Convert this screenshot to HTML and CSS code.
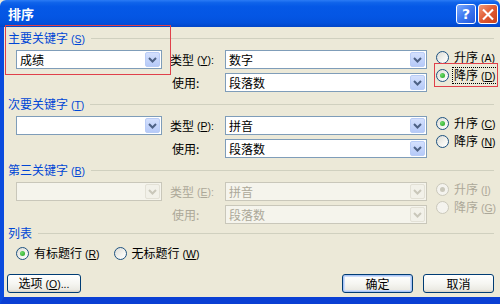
FILE: index.html
```html
<!DOCTYPE html>
<html>
<head>
<meta charset="utf-8">
<link rel="stylesheet" href="styles.css">
</head>
<body>
<div class="window">
  <div class="titlebar">
    <span class="title">排序</span>
    <div class="tb-buttons">
      <span class="tb-btn help">?</span>
      <span class="tb-btn close"><svg width="19" height="19" viewBox="0 0 19 19"><path d="M5 5 L14 14 M14 5 L5 14" stroke="#fff" stroke-width="2.2" stroke-linecap="square"/></svg></span>
    </div>
  </div>
  <div class="body">
    <section class="group">
      <div class="group-title"><span>主要关键字<span class="k"> (<u>S</u>)</span></span></div>
      <div class="group-grid">
        <div class="combo"><span class="val">成绩</span><span class="drop"><svg width="13" height="15" viewBox="0 0 13 15"><path d="M3 6 L6.5 9.5 L10 6" fill="none" stroke="#4D6185" stroke-width="2"/></svg></span></div>
        <div class="label">类型<span class="k"> (<u>Y</u>):</span></div>
        <div class="combo"><span class="val">数字</span><span class="drop"><svg width="13" height="15" viewBox="0 0 13 15"><path d="M3 6 L6.5 9.5 L10 6" fill="none" stroke="#4D6185" stroke-width="2"/></svg></span></div>
        <div class="radios">
          <label class="radio-item"><span class="radio"></span><span class="rtext">升序<span class="k"> (<u>A</u>)</span></span></label>
          <label class="radio-item"><span class="radio checked"></span><span class="rtext focus">降序<span class="k"> (<u>D</u>)</span></span></label>
        </div>
        <div class="label label-use">使用:</div>
        <div class="combo"><span class="val">段落数</span><span class="drop"><svg width="13" height="15" viewBox="0 0 13 15"><path d="M3 6 L6.5 9.5 L10 6" fill="none" stroke="#4D6185" stroke-width="2"/></svg></span></div>
      </div>
    </section>

    <section class="group">
      <div class="group-title"><span>次要关键字<span class="k"> (<u>T</u>)</span></span></div>
      <div class="group-grid">
        <div class="combo"><span class="val"></span><span class="drop"><svg width="13" height="15" viewBox="0 0 13 15"><path d="M3 6 L6.5 9.5 L10 6" fill="none" stroke="#4D6185" stroke-width="2"/></svg></span></div>
        <div class="label">类型<span class="k"> (<u>P</u>):</span></div>
        <div class="combo"><span class="val">拼音</span><span class="drop"><svg width="13" height="15" viewBox="0 0 13 15"><path d="M3 6 L6.5 9.5 L10 6" fill="none" stroke="#4D6185" stroke-width="2"/></svg></span></div>
        <div class="radios">
          <label class="radio-item"><span class="radio checked"></span><span class="rtext">升序<span class="k"> (<u>C</u>)</span></span></label>
          <label class="radio-item"><span class="radio"></span><span class="rtext">降序<span class="k"> (<u>N</u>)</span></span></label>
        </div>
        <div class="label label-use">使用:</div>
        <div class="combo"><span class="val">段落数</span><span class="drop"><svg width="13" height="15" viewBox="0 0 13 15"><path d="M3 6 L6.5 9.5 L10 6" fill="none" stroke="#4D6185" stroke-width="2"/></svg></span></div>
      </div>
    </section>

    <section class="group disabled">
      <div class="group-title"><span>第三关键字<span class="k"> (<u>B</u>)</span></span></div>
      <div class="group-grid">
        <div class="combo"><span class="val"></span><span class="drop"><svg width="13" height="15" viewBox="0 0 13 15"><path d="M3 6 L6.5 9.5 L10 6" fill="none" stroke="#C9C7BA" stroke-width="2"/></svg></span></div>
        <div class="label">类型<span class="k"> (<u>E</u>):</span></div>
        <div class="combo"><span class="val">拼音</span><span class="drop"><svg width="13" height="15" viewBox="0 0 13 15"><path d="M3 6 L6.5 9.5 L10 6" fill="none" stroke="#C9C7BA" stroke-width="2"/></svg></span></div>
        <div class="radios">
          <label class="radio-item"><span class="radio checked"></span><span class="rtext">升序<span class="k"> (<u>I</u>)</span></span></label>
          <label class="radio-item"><span class="radio"></span><span class="rtext">降序<span class="k"> (<u>G</u>)</span></span></label>
        </div>
        <div class="label label-use">使用:</div>
        <div class="combo"><span class="val">段落数</span><span class="drop"><svg width="13" height="15" viewBox="0 0 13 15"><path d="M3 6 L6.5 9.5 L10 6" fill="none" stroke="#C9C7BA" stroke-width="2"/></svg></span></div>
      </div>
    </section>

    <section class="list-group">
      <div class="group-title"><span>列表</span></div>
      <div class="radio-row">
        <label class="radio-item"><span class="radio checked"></span><span class="rtext">有标题行<span class="k"> (<u>R</u>)</span></span></label>
        <label class="radio-item"><span class="radio"></span><span class="rtext">无标题行<span class="k"> (<u>W</u>)</span></span></label>
      </div>
    </section>

    <div class="buttons">
      <button class="btn btn-options">选项<span class="k"> (<u>O</u>)...</span></button>
      <button class="btn btn-default">确定</button>
      <button class="btn">取消</button>
    </div>
  </div>
  <div class="annot annot-key"></div>
  <div class="annot annot-desc"></div>
</div>
</body>
</html>
```

FILE: styles.css
```css
body {
  margin: 0;
  font-family: "Noto Sans CJK SC", "Noto Sans", sans-serif;
  font-size: 12px;
  color: #000;
}

.window {
  position: relative;
  width: 500px;
  height: 304px;
  display: flex;
  flex-direction: column;
  background: #ECE9D8;
  overflow: hidden;
}

.titlebar {
  height: 27px;
  flex: none;
  display: flex;
  align-items: center;
  padding: 0 2px 0 8px;
  background: linear-gradient(#2B7BF5 0%, #0F63EA 10%, #0558E6 25%, #0456E4 60%, #0351DC 85%, #0246C8 100%);
  border-radius: 6px 6px 0 0;
}

.title {
  color: #fff;
  font-weight: bold;
  font-size: 13px;
  line-height: 14px;
}

.tb-buttons {
  margin-left: auto;
  display: flex;
  gap: 2px;
  margin-top: 1px;
}

.tb-btn {
  width: 20px;
  height: 20px;
  box-sizing: border-box;
  border: 1px solid #fff;
  border-radius: 3px;
  display: flex;
  align-items: center;
  justify-content: center;
}

.help {
  background: linear-gradient(135deg, #7BA9FF 0%, #3C78F0 50%, #2358DC 100%);
  color: #fff;
  font-family: "DejaVu Sans", sans-serif;
  font-weight: bold;
  font-size: 14px;
  line-height: 14px;
}

.close {
  background: linear-gradient(135deg, #F39A78 0%, #E05A32 50%, #C8401C 100%);
}

.body {
  flex: 1;
  display: flex;
  flex-direction: column;
  border-left: 4px solid #0A4BDE;
  border-bottom: 7px solid #0A3FD4;
  padding: 4px 6px 0 4px;
}

.k {
  font-family: "Liberation Sans", sans-serif;
  font-size: 10.5px;
}

.group {
  height: 61px;
  margin-bottom: 5px;
}

.group-title {
  height: 14px;
  display: flex;
  align-items: center;
  color: #0046D5;
  line-height: 14px;
  white-space: nowrap;
}

.group-title::after {
  content: "";
  flex: 1;
  height: 1px;
  background: #D0D0BF;
  margin-left: 6px;
}

.group-grid {
  margin-top: 5px;
  padding-left: 8px;
  display: grid;
  grid-template-columns: 146px 63px 202px 1fr;
  grid-template-rows: 19px 19px;
  row-gap: 4px;
}

.label {
  padding-left: 8px;
  display: flex;
  align-items: center;
  line-height: 14px;
  white-space: pre;
}

.label-use {
  grid-column: 2;
  padding-left: 10px;
}

.combo {
  box-sizing: border-box;
  height: 19px;
  border: 1px solid #7F9DB9;
  background: #fff;
  display: flex;
  align-items: center;
  padding: 0 1px 0 3px;
}

.combo .val {
  flex: 1;
  line-height: 14px;
}

.combo .drop {
  width: 15px;
  height: 15px;
  box-sizing: border-box;
  border: 1px solid #B9CCF6;
  border-radius: 2px;
  background: linear-gradient(#D4E0FD, #B6CAF8);
  display: flex;
  align-items: center;
  justify-content: center;
}

.radios {
  grid-column: 4;
  grid-row: 1 / span 2;
  padding-left: 9px;
  margin-top: -2px;
  display: flex;
  flex-direction: column;
}

.radio-item {
  height: 18px;
  display: flex;
  align-items: center;
  white-space: pre;
}

.radio {
  position: relative;
  width: 13px;
  height: 13px;
  box-sizing: border-box;
  border: 1px solid #1C5180;
  border-radius: 50%;
  background: linear-gradient(135deg, #DCDCD6 0%, #F4F4F0 60%, #FFFFFF 100%);
  margin-right: 4px;
  flex: none;
}

.radio.checked::after {
  content: "";
  position: absolute;
  left: 3px;
  top: 3px;
  width: 5px;
  height: 5px;
  border-radius: 50%;
  background: radial-gradient(circle at 35% 35%, #6EDC6A, #21A121);
}

.rtext {
  line-height: 14px;
  padding: 0 1px;
}

.rtext.focus {
  outline: 1px dotted #000;
  outline-offset: 0;
}

.disabled .label,
.disabled .rtext,
.disabled .combo .val {
  color: #ACA899;
}

.disabled .combo {
  border-color: #C9C7BA;
  background: #F5F4EC;
}

.disabled .combo .drop {
  background: #F2F1E9;
  border-color: #E3E1D6;
}

.disabled .radio {
  border-color: #CAC8BB;
  background: #F4F3EE;
}

.disabled .radio.checked::after {
  background: #CAC8BB;
}

.list-group {
  margin-top: -3px;
}

.radio-row {
  margin-top: 6px;
  padding-left: 8px;
  display: flex;
  height: 14px;
}

.radio-row .radio-item {
  height: 14px;
  margin-right: 13px;
}

.buttons {
  margin-top: 14px;
  display: flex;
  align-items: center;
}

.btn {
  box-sizing: border-box;
  width: 71px;
  height: 19px;
  padding: 0;
  border: 1px solid #003C74;
  border-radius: 3px;
  background: linear-gradient(#FFFFFF 0%, #F6F6F2 50%, #ECEBE4 85%, #D6D0C5 100%);
  font-family: "Noto Sans CJK SC", "Noto Sans", sans-serif;
  font-size: 12px;
  line-height: 14px;
  color: #000;
  margin-left: 10px;
  white-space: pre;
}

.btn-options {
  width: 74px;
  margin-left: -1px;
  margin-right: auto;
}

.btn-default {
  box-shadow: inset 0 0 0 1px #A9C4F5, inset 0 0 0 2px #CCDCF9;
}

.annot {
  position: absolute;
  border: 1px solid #E0404A;
  pointer-events: none;
}

.annot-key {
  left: 5px;
  top: 25px;
  width: 164px;
  height: 48px;
}

.annot-desc {
  left: 434px;
  top: 63px;
  width: 62px;
  height: 22px;
}
```
